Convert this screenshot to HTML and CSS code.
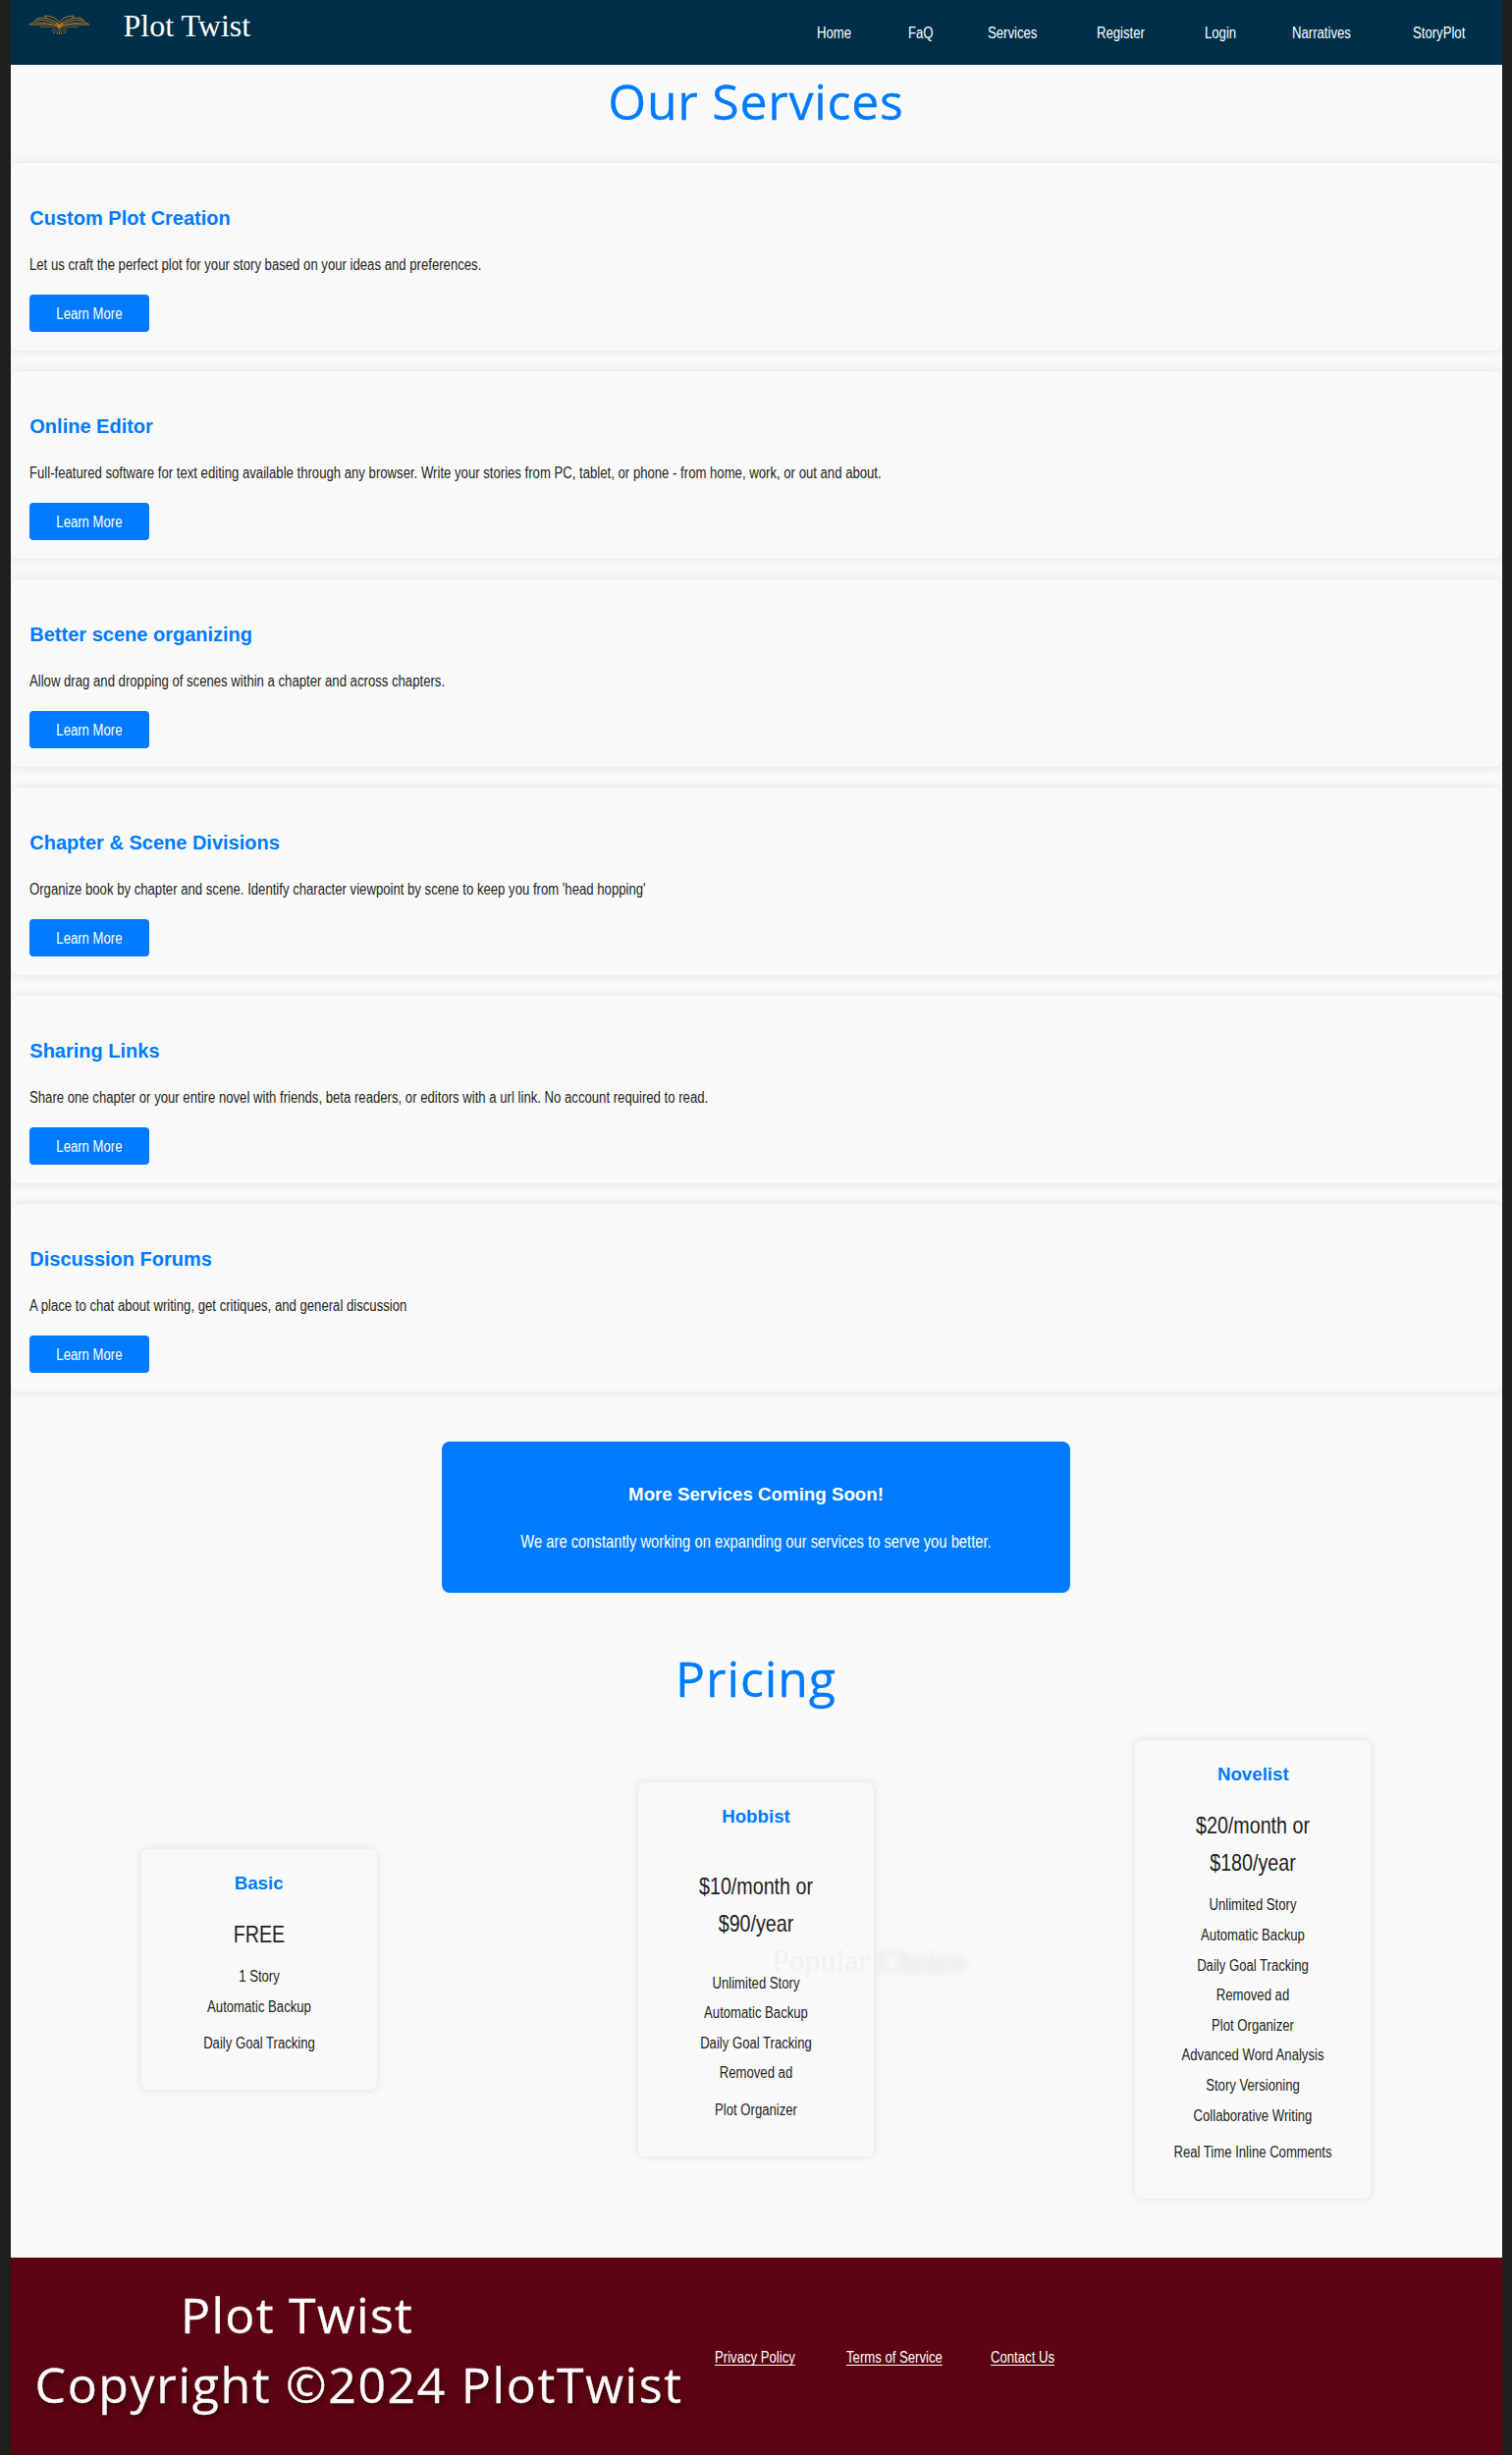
FILE: index.html
```html
<!DOCTYPE html>
<html lang="en">
<head>
<meta charset="utf-8">
<title>Plot Twist - Services</title>
<link rel="stylesheet" href="styles.css">
</head>
<body>
<div class="page">
  <header class="site-header">
    <svg class="logo" viewBox="30 30 182 60" fill="none" stroke="#b8741f" stroke-width="3" stroke-linejoin="round">
      <g id="wing">
        <path d="M30 60 L98 60 Q112 62 121 74"/>
        <path d="M30 60 L44 53 Q80 53 112 64"/>
        <path d="M48 46 Q85 43 119 64"/>
        <path d="M44 50 L56 40 Q88 36 121 60"/>
        <path d="M82 42 L76 33 Q110 34 121 54"/>
        <path d="M62 67 L98 67 Q108 68 112 76 Q118 79 121 79" stroke-width="2"/>
      </g>
      <use href="#wing" transform="translate(242 0) scale(-1 1)"/>
      <path d="M110 52 L121 60 L132 52 L128 66 L121 73 L114 66 Z" fill="#b8741f" stroke="none"/>
      <path d="M105 74 L98 79 M109 79 L103 87 M116 82 L113 90 M126 82 L129 90 M133 79 L139 87 M137 74 L144 79 M121 83 V90"/>
    </svg>
    <div class="brand">Plot Twist</div>
    <nav class="nav">
      <a class="narrow">Home</a>
      <a class="narrow">FaQ</a>
      <a class="narrow">Services</a>
      <a class="narrow">Register</a>
      <a class="narrow">Login</a>
      <a class="narrow">Narratives</a>
      <a class="narrow">StoryPlot</a>
    </nav>
  </header>

  <main>
    <h1 class="heading">Our Services</h1>
    <section class="services">
      <article class="service">
        <h2>Custom Plot Creation</h2>
        <p class="narrow">Let us craft the perfect plot for your story based on your ideas and preferences.</p>
        <a class="button"><span>Learn More</span></a>
      </article>
      <article class="service">
        <h2>Online Editor</h2>
        <p class="narrow">Full-featured software for text editing available through any browser. Write your stories from PC, tablet, or phone - from home, work, or out and about.</p>
        <a class="button"><span>Learn More</span></a>
      </article>
      <article class="service">
        <h2>Better scene organizing</h2>
        <p class="narrow">Allow drag and dropping of scenes within a chapter and across chapters.</p>
        <a class="button"><span>Learn More</span></a>
      </article>
      <article class="service">
        <h2>Chapter &amp; Scene Divisions</h2>
        <p class="narrow">Organize book by chapter and scene. Identify character viewpoint by scene to keep you from 'head hopping'</p>
        <a class="button"><span>Learn More</span></a>
      </article>
      <article class="service">
        <h2>Sharing Links</h2>
        <p class="narrow">Share one chapter or your entire novel with friends, beta readers, or editors with a url link. No account required to read.</p>
        <a class="button"><span>Learn More</span></a>
      </article>
      <article class="service">
        <h2>Discussion Forums</h2>
        <p class="narrow">A place to chat about writing, get critiques, and general discussion</p>
        <a class="button"><span>Learn More</span></a>
      </article>
    </section>

    <section class="banner">
      <h3>More Services Coming Soon!</h3>
      <p>We are constantly working on expanding our services to serve you better.</p>
    </section>

    <h1 class="heading heading-pricing">Pricing</h1>
    <section class="plans">
      <article class="plan">
        <h3>Basic</h3>
        <p class="price">FREE</p>
        <ul>
          <li>1 Story</li>
          <li>Automatic Backup</li>
          <li>Daily Goal Tracking</li>
        </ul>
      </article>
      <article class="plan plan-popular">
        <h3>Hobbist</h3>
        <p class="price">$10/month or<br>$90/year</p>
        <ul>
          <li>Unlimited Story</li>
          <li>Automatic Backup</li>
          <li>Daily Goal Tracking</li>
          <li>Removed ad</li>
          <li>Plot Organizer</li>
        </ul>
        <div class="ribbon">Popular <span>Choice</span></div>
      </article>
      <article class="plan">
        <h3>Novelist</h3>
        <p class="price">$20/month or<br>$180/year</p>
        <ul>
          <li>Unlimited Story</li>
          <li>Automatic Backup</li>
          <li>Daily Goal Tracking</li>
          <li>Removed ad</li>
          <li>Plot Organizer</li>
          <li>Advanced Word Analysis</li>
          <li>Story Versioning</li>
          <li>Collaborative Writing</li>
          <li>Real Time Inline Comments</li>
        </ul>
      </article>
    </section>
  </main>

  <footer class="site-footer">
    <div class="footer-text">
      <div class="footer-brand">Plot Twist</div>
      <div class="copyright">Copyright ©2024 PlotTwist</div>
    </div>
    <nav class="footer-links">
      <a class="narrow">Privacy Policy</a>
      <a class="narrow">Terms of Service</a>
      <a class="narrow">Contact Us</a>
    </nav>
  </footer>
</div>
</body>
</html>
```
FILE: styles.css
```css
* {
  box-sizing: border-box;
  margin: 0;
  padding: 0;
}

body {
  background: #1e1e1e;
  color: #231f20;
  font: 16px/25.6px "Liberation Sans", Arial, sans-serif;
}

.page {
  margin: 0 10.5px;
  height: 2499.4px;
  background: #f9f9f9;
  overflow: hidden;
}

/* Condensed body copy */
.narrow {
  display: block;
  white-space: nowrap;
  transform: scaleX(0.8215);
  transform-origin: left center;
}

.site-header {
  display: flex;
  height: 65.5px;
  padding-left: 19.5px;
  background: #003049;
  color: #fff;
}

.logo {
  flex: none;
  width: 61px;
  height: 20px;
  margin-top: 15px;
}

.brand {
  flex: none;
  width: 741px;
  padding-left: 34.5px;
  padding-top: 7.5px;
  font: 32px/37px "Liberation Serif", "Times New Roman", serif;
}

.nav {
  display: grid;
  grid-template-columns: 92.6px 81.1px 111.6px 109.3px 89px 123px 60px;
  padding-top: 21px;
  white-space: nowrap;
}

.heading {
  margin-top: 2.6px;
  color: #007bff;
  font: 400 50px/71px "Open Sans", "Noto Sans", sans-serif;
  letter-spacing: 0.75px;
  text-align: center;
  -webkit-text-stroke: 0.3px currentColor;
}

.services {
  display: grid;
  gap: 20.2px;
  margin-top: 26.6px;
}

.service {
  height: 191.8px;
  padding: 40.4px 19.8px 20px;
  border-radius: 8px;
  box-shadow: 0 0 10px rgba(0, 0, 0, 0.1);
  background: #f9f9f9;
}

.service h2 {
  margin-bottom: 18.5px;
  color: #007bff;
  font-size: 20px;
  line-height: 32px;
}

.button {
  display: block;
  width: 122px;
  height: 38px;
  margin-top: 17.5px;
  padding-top: 1px;
  border-radius: 4px;
  background: #007bff;
  color: #fff;
  line-height: 38px;
  text-align: center;
}

.button span {
  display: inline-block;
  transform: scaleX(0.82);
}

.banner {
  width: 640px;
  height: 154.2px;
  margin: 50.2px auto 0;
  padding-top: 38px;
  border-radius: 8px;
  background: #007bff;
  color: #fff;
  text-align: center;
}

.banner h3 {
  font-size: 18.72px;
  line-height: 32px;
}

.banner p {
  margin-top: 18.5px;
  font-size: 17.6px;
  line-height: 28px;
  transform: scaleX(0.84);
}

.heading-pricing {
  margin-top: 52.1px;
  letter-spacing: 0.9px;
}

.plans {
  display: grid;
  grid-template-columns: repeat(3, 1fr);
  align-items: center;
  justify-items: center;
  margin-top: 27.2px;
}

.plan {
  position: relative;
  width: 240px;
  padding: 20px 20px 31.4px;
  border-radius: 8px;
  box-shadow: 0 0 10px rgba(0, 0, 0, 0.1);
  background: #f9f9f9;
  text-align: center;
}

.plan h3 {
  color: #007bff;
  font-size: 18.72px;
  line-height: 29px;
}

.price {
  margin: 19.4px 0 9px;
  font-size: 24px;
  line-height: 38px;
  transform: scaleX(0.82);
}

.plan-popular .price {
  margin: 37.6px 0 26.8px;
}

.plan ul {
  list-style: none;
}

.plan li {
  line-height: 30.6px;
  white-space: nowrap;
  transform: scaleX(0.82);
}

.plan li:last-child {
  margin-top: 7px;
}

.ribbon {
  position: absolute;
  top: 162.5px;
  left: 136px;
  color: #f1f1f1;
  font: 32px/37px "Liberation Serif", "Times New Roman", serif;
  letter-spacing: -0.1px;
  white-space: nowrap;
}

.ribbon span {
  text-shadow: 2px 2px 8px rgba(0, 0, 0, 0.12);
}

.site-footer {
  display: flex;
  height: 200.2px;
  margin-top: 59.8px;
  padding-left: 25px;
  background: #5c0411;
  color: #fff;
}

.footer-text {
  flex: none;
  width: 692px;
  padding-top: 22.8px;
  font: 50px/71px "Open Sans", "Noto Sans", sans-serif;
  white-space: nowrap;
  -webkit-text-stroke: 0.3px currentColor;
}

.footer-brand {
  padding-left: 148.5px;
  letter-spacing: 1.3px;
}

.copyright {
  color: #f9f9f9;
  letter-spacing: 1.65px;
  text-shadow: 2px 4px 5px rgba(0, 0, 0, 0.4);
}

.footer-links {
  display: grid;
  grid-template-columns: 134px 147.4px 70px;
  padding-top: 89.3px;
}

.footer-links a {
  text-decoration: underline;
  text-decoration-skip-ink: none;
  text-underline-offset: 2px;
  height: 26px;
}
```
